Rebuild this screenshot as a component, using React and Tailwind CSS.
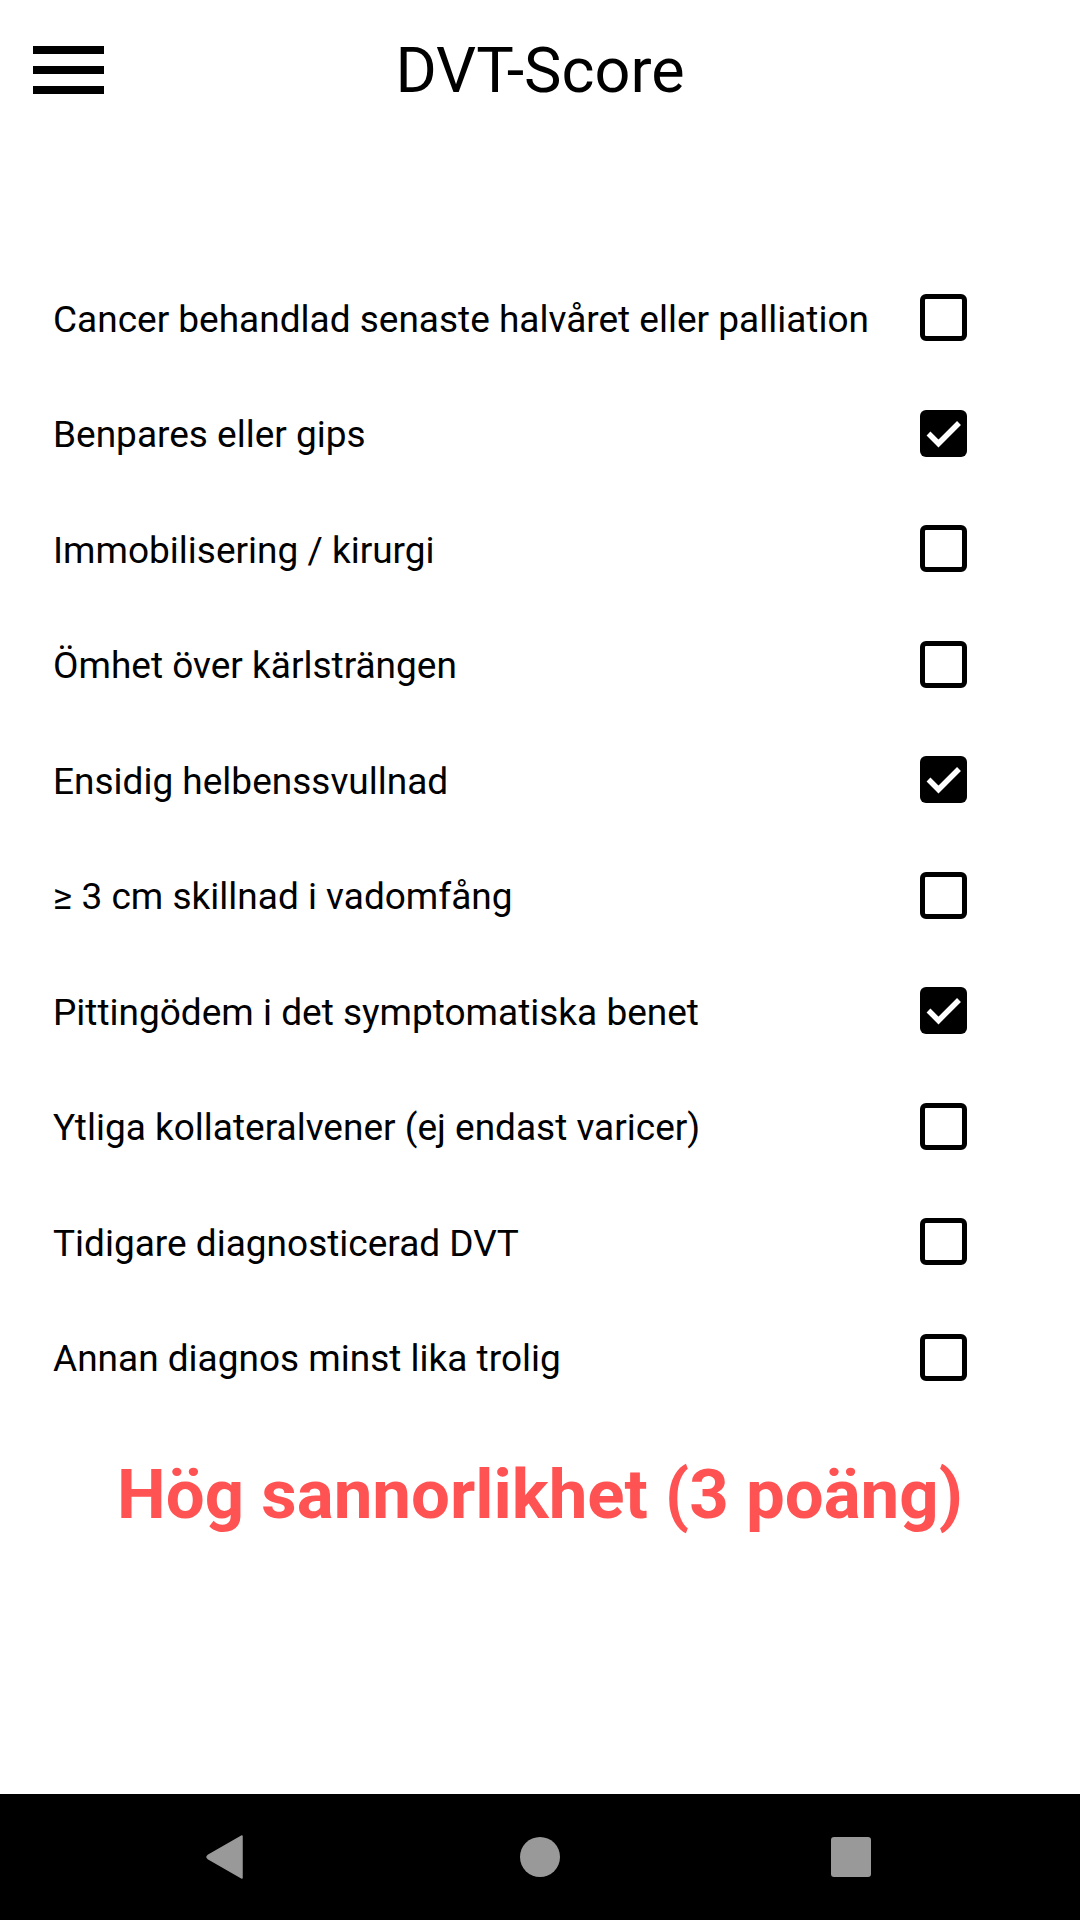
import React from "react";

const items = [
  ["Cancer behandlad senaste halvåret eller palliation", false],
  ["Benpares eller gips", true],
  ["Immobilisering / kirurgi", false],
  ["Ömhet över kärlsträngen", false],
  ["Ensidig helbenssvullnad", true],
  ["≥ 3 cm skillnad i vadomfång", false],
  ["Pittingödem i det symptomatiska benet", true],
  ["Ytliga kollateralvener (ej endast varicer)", false],
  ["Tidigare diagnosticerad DVT", false],
  ["Annan diagnos minst lika trolig", false],
];

function Box({ checked }) {
  if (checked) {
    return (
      <div className="w-[47px] h-[47px] rounded-[6px] bg-black flex items-center justify-center shrink-0">
        <svg width="47" height="47" viewBox="0 0 47 47">
          <polyline points="8.5,23.5 18.5,33.5 39,13" fill="none" stroke="white" strokeWidth="5.5" />
        </svg>
      </div>
    );
  }
  return <div className="w-[47px] h-[47px] rounded-[6px] border-[5px] border-black shrink-0" />;
}

export default function App() {
  return (
    <div className="w-[1080px] h-[1920px] bg-white flex flex-col font-['Roboto',sans-serif] text-black">
      <header className="h-[140px] grid grid-cols-[1fr_auto_1fr] items-center">
        <div className="pl-[33px] flex flex-col gap-[12px]">
          <div className="w-[71px] h-[8px] bg-black" />
          <div className="w-[71px] h-[8px] bg-black" />
          <div className="w-[71px] h-[8px] bg-black" />
        </div>
        <h1 className="text-[63px] leading-none font-normal">DVT-Score</h1>
        <div />
      </header>
      <div className="mt-[120px] flex flex-col">
        {items.map(([label, checked]) => (
          <div key={label} className="h-[115.5px] flex items-center justify-between pl-[53px] pr-[113px]">
            <span className="text-[37px] leading-none pt-[3px]">{label}</span>
            <Box checked={checked} />
          </div>
        ))}
      </div>
      <div className="mt-[45px] text-center text-[69px] leading-none font-bold text-[#ff5252]">
        Hög sannorlikhet (3 poäng)
      </div>
      <div className="flex-1" />
      <nav className="h-[126px] bg-black flex items-center">
        <svg className="ml-[206px]" width="38" height="44" viewBox="0 0 38 44">
          <path d="M36 1 L36 43 L2 23.5 Q0 22 2 20.5 Z" fill="#999" strokeLinejoin="round" stroke="#999" strokeWidth="1.5" />
        </svg>
        <div className="ml-[276px] w-[40px] h-[40px] rounded-full bg-[#999]" />
        <div className="ml-[271px] w-[40px] h-[40px] rounded-[3px] bg-[#999]" />
      </nav>
    </div>
  );
}
